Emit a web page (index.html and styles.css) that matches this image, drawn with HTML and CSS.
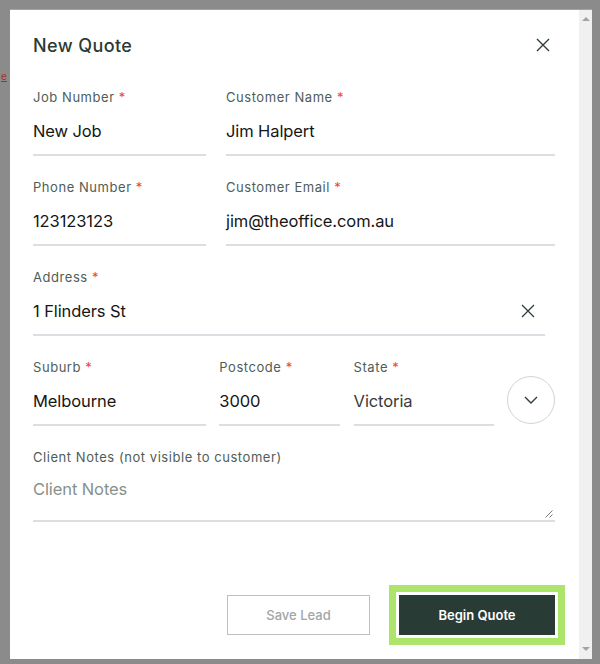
FILE: index.html
```html
<!DOCTYPE html>
<html lang="en">
<head>
<meta charset="utf-8">
<title>New Quote</title>
<link rel="stylesheet" href="styles.css">
</head>
<body>
<div class="backdrop">
  <span class="bg-link">e</span>
  <div class="modal">
    <div class="modal-body">
      <div class="header">
        <h1 class="title">New Quote</h1>
        <svg class="close" width="14" height="14" viewBox="0 0 14 14"><path d="M1 1L13 13M13 1L1 13" stroke="#2f3d37" stroke-width="1.4" fill="none"/></svg>
      </div>
      <div class="form">
        <div class="row row-two">
          <div class="field">
            <div class="label">Job Number <span class="req">*</span></div>
            <div class="input">New Job</div>
          </div>
          <div class="field">
            <div class="label">Customer Name <span class="req">*</span></div>
            <div class="input">Jim Halpert</div>
          </div>
        </div>
        <div class="row row-two">
          <div class="field">
            <div class="label">Phone Number <span class="req">*</span></div>
            <div class="input">123123123</div>
          </div>
          <div class="field">
            <div class="label">Customer Email <span class="req">*</span></div>
            <div class="input">jim@theoffice.com.au</div>
          </div>
        </div>
        <div class="row row-address">
          <div class="field">
            <div class="label">Address <span class="req">*</span></div>
            <div class="input input-clear">1 Flinders St
              <svg class="clear" width="14" height="14" viewBox="0 0 14 14"><path d="M1 1L13 13M13 1L1 13" stroke="#2f3d37" stroke-width="1.3" fill="none"/></svg>
            </div>
          </div>
        </div>
        <div class="row row-four">
          <div class="field">
            <div class="label">Suburb <span class="req">*</span></div>
            <div class="input">Melbourne</div>
          </div>
          <div class="field">
            <div class="label">Postcode <span class="req">*</span></div>
            <div class="input">3000</div>
          </div>
          <div class="field">
            <div class="label">State <span class="req">*</span></div>
            <div class="input input-state">Victoria</div>
          </div>
          <div class="circle-btn">
            <svg width="14" height="8" viewBox="0 0 14 8"><path d="M1 1L7 7L13 1" stroke="#2f3d37" stroke-width="1.4" fill="none"/></svg>
          </div>
        </div>
        <div class="row row-notes">
          <div class="field">
            <div class="label">Client Notes (not visible to customer)</div>
            <div class="textarea">
              <span class="placeholder">Client Notes</span>
              <svg class="grip" width="8" height="8" viewBox="0 0 8 8"><path d="M7.5 0.5L0.5 7.5M7.5 4.5L4.5 7.5" stroke="#7a7a7a" stroke-width="1" fill="none"/></svg>
            </div>
          </div>
        </div>
      </div>
      <div class="footer">
        <button class="btn btn-secondary">Save Lead</button>
        <button class="btn btn-primary">Begin Quote</button>
      </div>
    </div>
    <div class="scrollbar">
      <span class="arrow arrow-up"></span>
      <span class="arrow arrow-down"></span>
    </div>
  </div>
</div>
</body>
</html>
```
FILE: styles.css
```css
html, body {
  margin: 0;
  padding: 0;
}
body {
  width: 600px;
  height: 664px;
  overflow: hidden;
  background: #8b8b8b;
  font-family: Inter, "Liberation Sans", Arial, sans-serif;
}
.backdrop {
  position: relative;
  padding: 10px 0 0 10px;
  display: flex;
  box-sizing: border-box;
  height: 664px;
}
.bg-link {
  position: absolute;
  left: 1px;
  top: 70px;
  font-size: 10px;
  line-height: 12px;
  color: #a4322a;
  text-decoration: underline;
}
.modal {
  display: flex;
  height: 649px;
  background: #fff;
  box-shadow: 0 -1px 0 #a3a3a3;
}
.modal-body {
  width: 569px;
  box-sizing: border-box;
  padding: 23px 24px 24px 23px;
  display: flex;
  flex-direction: column;
}
.header {
  display: flex;
  justify-content: space-between;
  align-items: center;
  height: 24px;
}
.title {
  margin: 0;
  font-size: 18px;
  font-weight: 500;
  color: #2b3a34;
  letter-spacing: 0.4px;
}
.close {
  margin-right: 5px;
}
.form {
  margin-top: 31px;
  display: flex;
  flex-direction: column;
  gap: 22px;
}
.row {
  display: grid;
}
.row-two {
  grid-template-columns: 173px 1fr;
  column-gap: 20px;
}
.row-address {
  grid-template-columns: 512px;
}
.row-four {
  grid-template-columns: 173px 121px 140px 48px;
  column-gap: 13.3px;
}
.label {
  font-size: 13px;
  line-height: 18px;
  color: #4f5d57;
  letter-spacing: 0.55px;
}
.req {
  color: #e8463c;
}
.input {
  margin-top: 2px;
  height: 48px;
  box-sizing: border-box;
  border-bottom: 2px solid #dddde4;
  display: flex;
  align-items: center;
  font-size: 16.5px;
  color: #161616;
  letter-spacing: -0.1px;
}
.input-clear {
  justify-content: space-between;
}
.clear {
  margin-right: 10px;
}
.input-state {
  color: #3a3a3a;
}
.circle-btn {
  align-self: end;
  margin-bottom: 2px;
  width: 48px;
  height: 48px;
  box-sizing: border-box;
  border: 1px solid #d2d3da;
  border-radius: 50%;
  display: flex;
  align-items: center;
  justify-content: center;
}
.textarea {
  position: relative;
  margin-top: 2px;
  height: 54px;
  box-sizing: border-box;
  padding-top: 10px;
  border-bottom: 2px solid #dddde4;
  font-size: 16.5px;
  line-height: 22px;
  letter-spacing: -0.1px;
}
.placeholder {
  color: #87918c;
}
.grip {
  position: absolute;
  right: 2px;
  bottom: 2px;
}
.footer {
  margin-top: auto;
  display: flex;
  justify-content: flex-end;
  gap: 29px;
}
.btn {
  height: 40px;
  font-family: Inter, "Liberation Sans", Arial, sans-serif;
  font-size: 13px;
  cursor: pointer;
}
.btn-secondary {
  width: 143px;
  background: #fff;
  border: 1px solid #bcc0c0;
  color: #a2a6a6;
  font-weight: 500;
}
.btn-primary {
  width: 156px;
  background: #293b35;
  border: none;
  color: #fff;
  font-weight: 600;
  box-shadow: 0 0 0 3px #fff, 0 0 0 10px #ade56a;
}
.scrollbar {
  position: relative;
  width: 13px;
  background: #f0f0f0;
}
.arrow {
  position: absolute;
  left: 3px;
  width: 0;
  height: 0;
  border-left: 4px solid transparent;
  border-right: 4px solid transparent;
}
.arrow-up {
  top: 7px;
  border-bottom: 4px solid #a3a3a3;
}
.arrow-down {
  bottom: 8px;
  border-top: 4px solid #a3a3a3;
}
```
